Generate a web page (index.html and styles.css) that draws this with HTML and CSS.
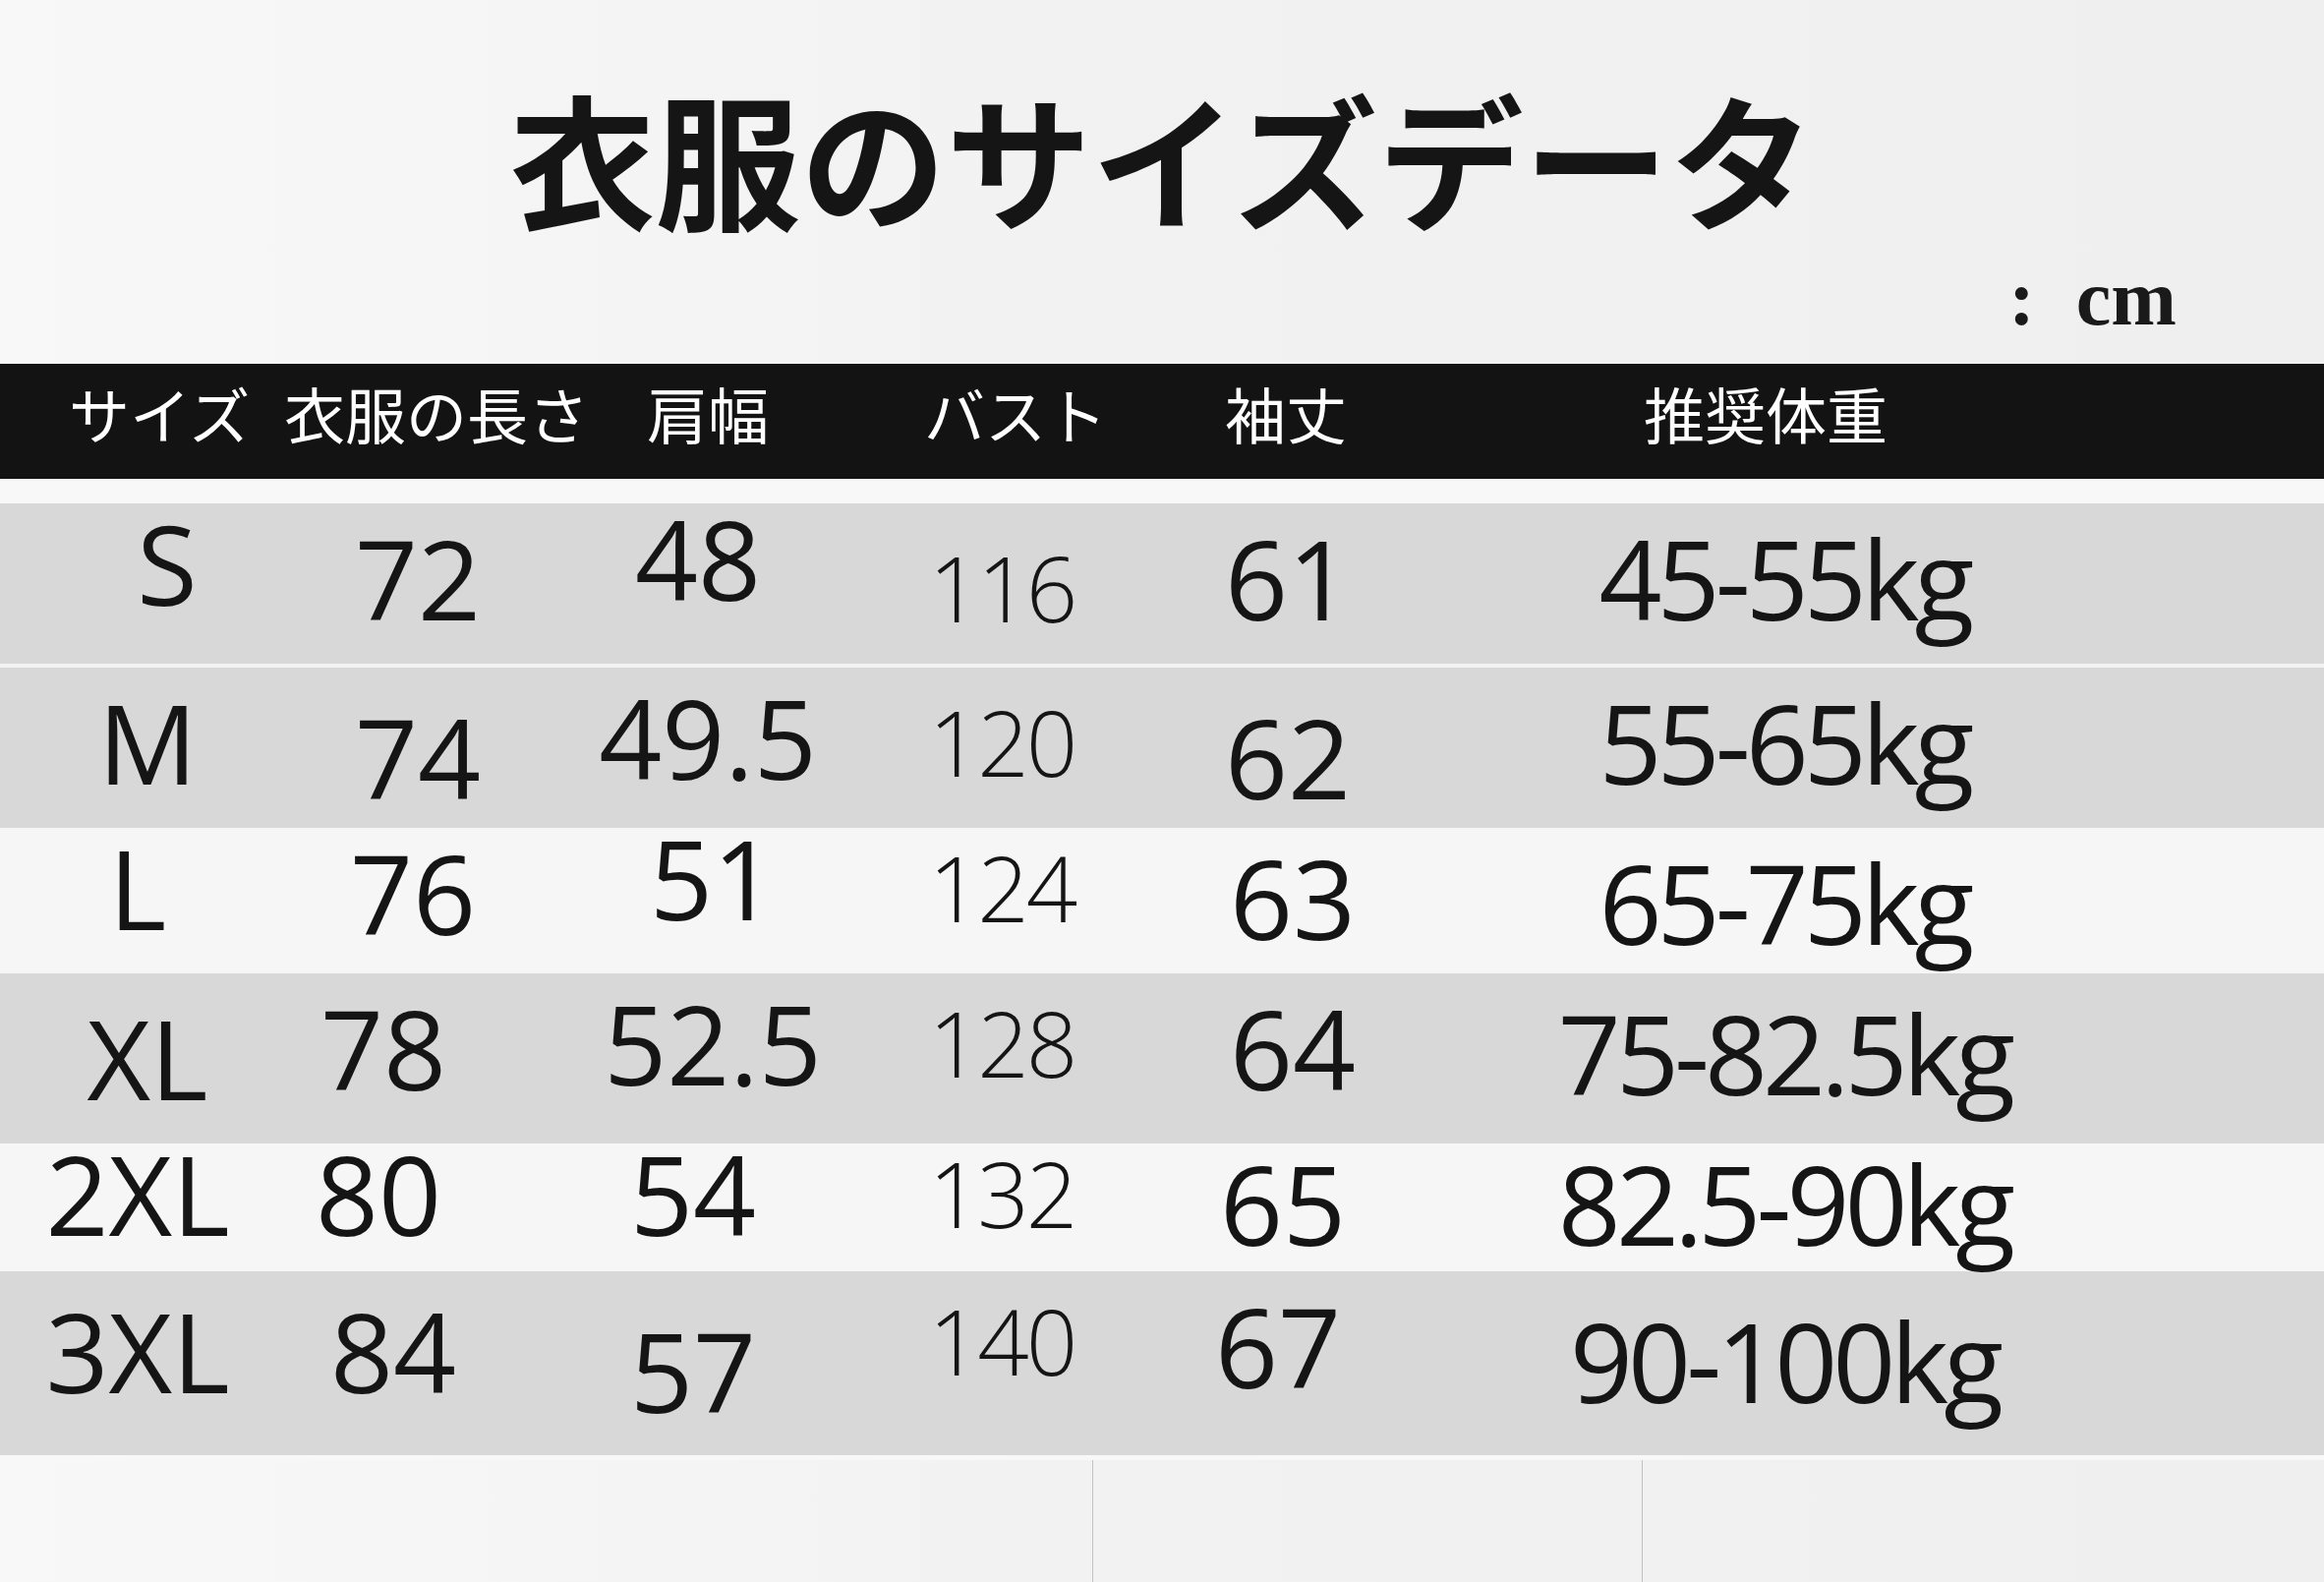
FILE: index.html
```html
<!DOCTYPE html>
<html lang="ja">
<head>
<meta charset="utf-8">
<title>衣服のサイズデータ</title>
<link rel="stylesheet" href="styles.css">
</head>
<body>
<main class="sheet">
  <h1 class="title">衣服のサイズデータ</h1>
  <p class="unit"><span class="colon">:</span><span>cm</span></p>
  <section class="chart">
    <div class="chart-head">
      <span>サイズ</span><span>衣服の長さ</span><span>肩幅</span><span>バスト</span><span>袖丈</span><span>推奨体重</span>
    </div>
    <div class="spacer"></div>

    <div class="row shade r-s">
      <div class="cell h20 v5"><span>S</span></div>
      <div class="cell h15 v20"><span>72</span></div>
      <div class="cell h-5 v0"><span>48</span></div>
      <div class="cell bust v40"><span>116</span></div>
      <div class="cell v20"><span>61</span></div>
      <div class="cell weight v20"><span>45-55kg</span></div>
    </div>

    <div class="row shade r-m">
      <div class="cell v20"><span>M</span></div>
      <div class="cell h15 v35"><span>74</span></div>
      <div class="cell h5 v15"><span>49.5</span></div>
      <div class="cell bust v30"><span>120</span></div>
      <div class="cell v35"><span>62</span></div>
      <div class="cell weight v20"><span>55-65kg</span></div>
    </div>

    <div class="row light r-l">
      <div class="cell h-10 v5"><span>L</span></div>
      <div class="cell h10 v10"><span>76</span></div>
      <div class="cell h10 v-5"><span>51</span></div>
      <div class="cell bust v15"><span>124</span></div>
      <div class="cell h5 v15"><span>63</span></div>
      <div class="cell weight v20"><span>65-75kg</span></div>
    </div>

    <div class="row shade r-xl">
      <div class="cell v30"><span>XL</span></div>
      <div class="cell h-20 v20"><span>78</span></div>
      <div class="cell h10 v15"><span>52.5</span></div>
      <div class="cell bust v25"><span>128</span></div>
      <div class="cell h5 v20"><span>64</span></div>
      <div class="cell weight v25"><span>75-82.5kg</span></div>
    </div>

    <div class="row light r-2xl">
      <div class="cell h-10 v-5"><span>2XL</span></div>
      <div class="cell h-25 v-5"><span>80</span></div>
      <div class="cell h-10 v-5"><span>54</span></div>
      <div class="cell bust v5"><span>132</span></div>
      <div class="cell h-5 v5"><span>65</span></div>
      <div class="cell weight v5"><span>82.5-90kg</span></div>
    </div>

    <div class="row shade r-3xl">
      <div class="cell h-10 v25"><span>3XL</span></div>
      <div class="cell h-10 v25"><span>84</span></div>
      <div class="cell h-10 v45"><span>57</span></div>
      <div class="cell bust v25"><span>140</span></div>
      <div class="cell h-10 v20"><span>67</span></div>
      <div class="cell weight v35"><span>90-100kg</span></div>
    </div>
  </section>
  <div class="foot"><div></div><div></div><div></div></div>
</main>
</body>
</html>
```

FILE: styles.css
```css
html, body {
  margin: 0;
  padding: 0;
}

body {
  width: 2364px;
  height: 1609px;
  overflow: hidden;
  background: #f1f1f1;
}

.sheet {
  display: flex;
  flex-direction: column;
  height: 1609px;
  background: linear-gradient(90deg, #f8f8f8 0%, #f2f2f2 45%, #efefef 100%);
}

.title {
  margin: 0;
  padding-top: 85px;
  font: 700 148px/148px "Noto Sans CJK JP", sans-serif;
  text-align: center;
  color: #151515;
}

.unit {
  margin: 30px 0 0;
  padding-right: 150px;
  text-align: right;
  font: 700 80px/80px "Liberation Serif", serif;
  color: #1a1a1a;
}

.colon {
  margin-right: 42px;
}

.chart {
  margin-top: 27px;
}

.chart-head {
  height: 117px;
  box-sizing: border-box;
  padding: 19px 0 0 70px;
  display: grid;
  grid-template-columns: 219px 369px 282px 306px 426px 1fr;
  background: #131313;
  color: #ffffff;
  font: 400 62px/62px "Noto Sans CJK JP", sans-serif;
  white-space: nowrap;
}

.spacer {
  height: 25px;
  background: #f8f8f8;
}

.row {
  display: grid;
  grid-template-columns: 300px 220px 390px 218px 364px 646px;
  font: 400 112px/1 "Open Sans", sans-serif;
  color: #151515;
}

.shade { background: #d8d8d8; }
.light { background: #f6f6f6; }

.r-s   { height: 163px; }
.r-m   { height: 163px; border-top: 4px solid #f2f2f2; }
.r-l   { height: 148px; }
.r-xl  { height: 173px; }
.r-2xl { height: 130px; }
.r-3xl { height: 187px; border-bottom: 5px solid #f8f8f8; }

.cell {
  display: flex;
  justify-content: center;
  align-items: flex-start;
}

.cell span {
  white-space: nowrap;
  margin-top: var(--v, 0px);
  margin-left: calc(2 * var(--h, 0px));
}

.bust {
  font-size: 92px;
  font-weight: 300;
  letter-spacing: -3px;
}

.weight {
  letter-spacing: -5px;
}

/* vertical nudges */
.v-5 { --v: -5px; }
.v0  { --v: 0px; }
.v5  { --v: 5px; }
.v10 { --v: 10px; }
.v15 { --v: 15px; }
.v20 { --v: 20px; }
.v25 { --v: 25px; }
.v30 { --v: 30px; }
.v35 { --v: 35px; }
.v40 { --v: 40px; }
.v45 { --v: 45px; }

/* horizontal nudges */
.h-25 { --h: -25px; }
.h-20 { --h: -20px; }
.h-10 { --h: -10px; }
.h-5  { --h: -5px; }
.h5   { --h: 5px; }
.h10  { --h: 10px; }
.h15  { --h: 15px; }
.h20  { --h: 20px; }

.foot {
  flex: 1;
  display: grid;
  grid-template-columns: 1111px 559px 1fr;
}

.foot div + div {
  border-left: 1px solid #c2c2c2;
}
```
